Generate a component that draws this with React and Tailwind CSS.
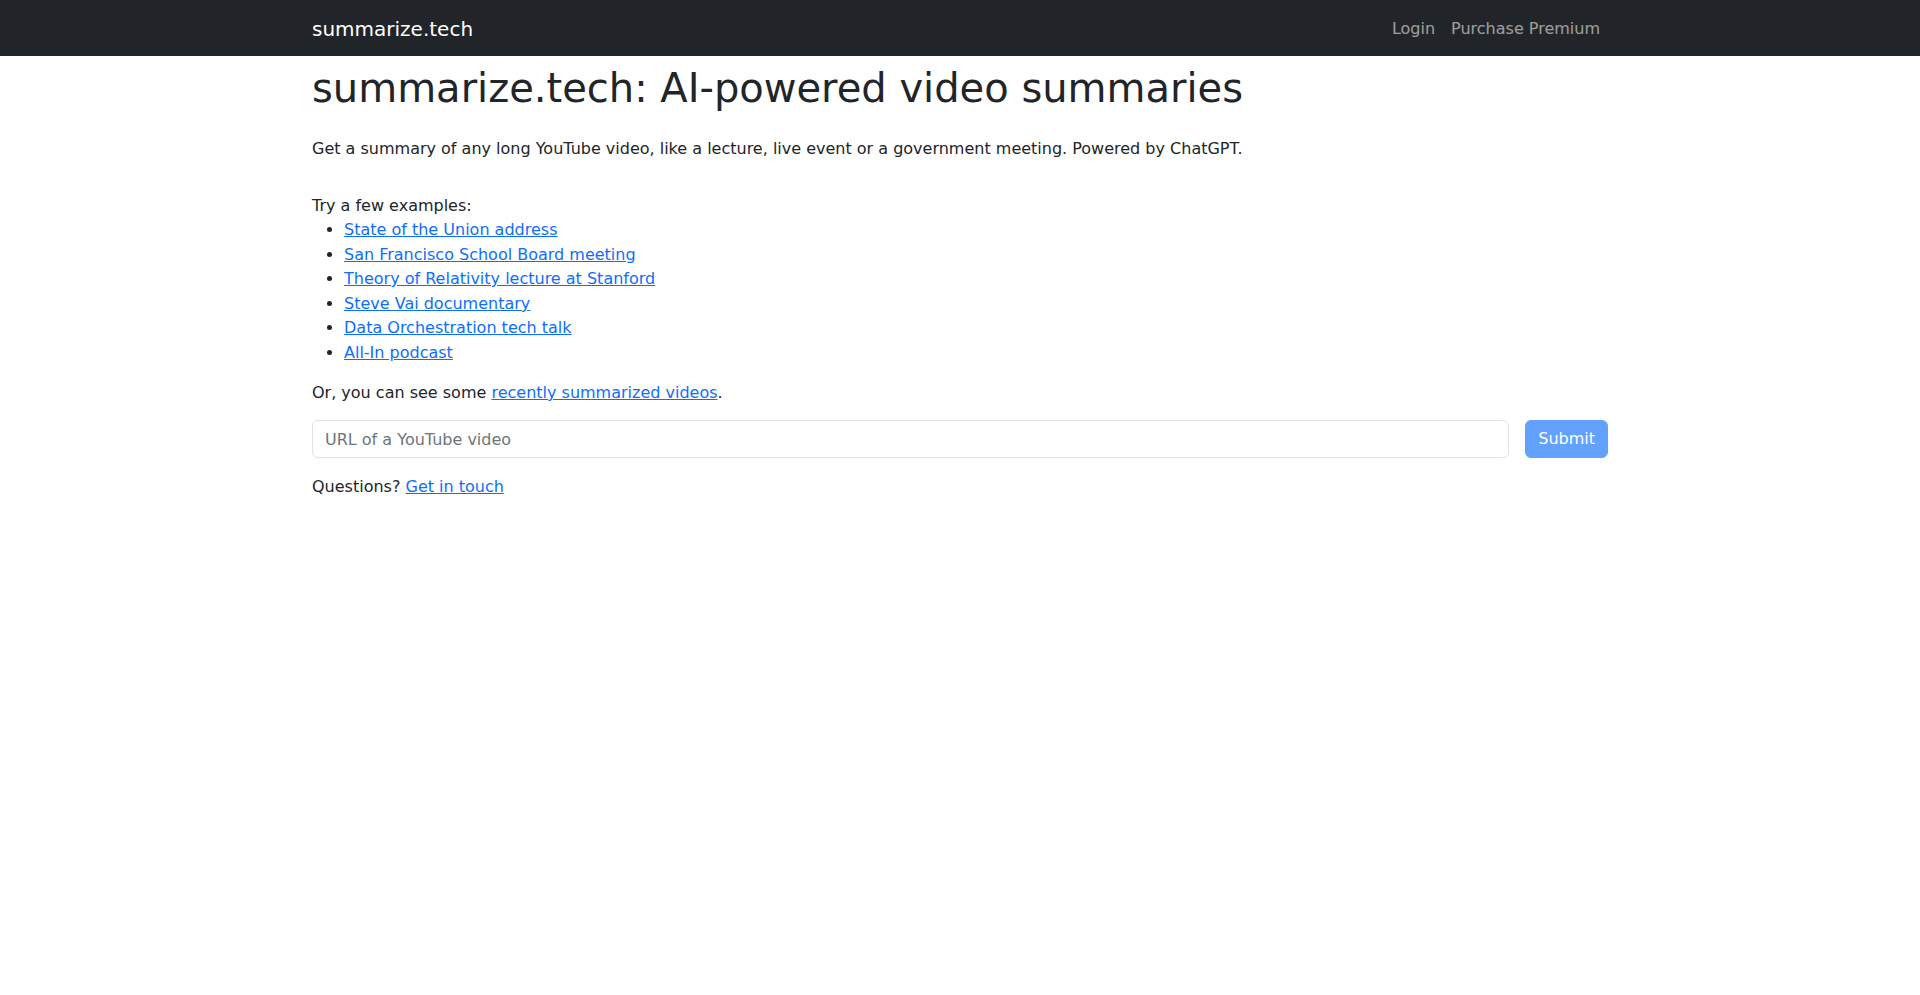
export default function App() {
  const examples = [
    "State of the Union address",
    "San Francisco School Board meeting",
    "Theory of Relativity lecture at Stanford",
    "Steve Vai documentary",
    "Data Orchestration tech talk",
    "All-In podcast",
  ];

  return (
    <div className="min-h-screen bg-white text-[#212529] text-base leading-6 font-['DejaVu_Sans',sans-serif]">
      {/* Navbar */}
      <nav className="bg-[#212529] h-14">
        <div className="max-w-[1320px] mx-auto px-3 h-full flex items-center justify-between">
          <a href="#" className="text-white text-[20px] leading-[30px] pt-[6px] pb-[4px]">
            summarize.tech
          </a>
          <div className="flex">
            <a href="#" className="px-2 pt-[9px] pb-[7px] text-white/55">Login</a>
            <a href="#" className="px-2 pt-[9px] pb-[7px] text-white/55">Purchase Premium</a>
          </div>
        </div>
      </nav>

      {/* Main */}
      <main className="max-w-[1320px] mx-auto px-3 pt-2">
        <h1 className="text-[40px] leading-[48px] font-normal mb-[25px]">
          summarize.tech: AI-powered video summaries
        </h1>
        <p className="mb-[33px]">
          Get a summary of any long YouTube video, like a lecture, live event or a government meeting. Powered by ChatGPT.
        </p>
        <div>Try a few examples:</div>
        <ul className="list-disc pl-8 mb-4">
          {examples.map(ex => (
            <li key={ex} className="leading-[24.5px]">
              <a href="#" className="text-[#0d6efd] underline">{ex}</a>
            </li>
          ))}
        </ul>
        <p className="mb-[15px]">
          Or, you can see some{" "}
          <a href="#" className="text-[#0d6efd] underline">recently summarized videos</a>.
        </p>
        <form className="flex gap-4 mb-[17px]" onSubmit={e => e.preventDefault()}>
          <input
            type="text"
            placeholder="URL of a YouTube video"
            className="flex-1 h-[38px] px-3 border border-[#dee2e6] rounded-md text-base placeholder:text-[#6c757d] outline-none"
          />
          <button
            type="submit"
            className="h-[38px] px-3 rounded-md bg-[#62a1fe] border border-[#62a1fe] text-white"
          >
            Submit
          </button>
        </form>
        <p>
          Questions? <a href="#" className="text-[#0d6efd] underline">Get in touch</a>
        </p>
      </main>
    </div>
  );
}
